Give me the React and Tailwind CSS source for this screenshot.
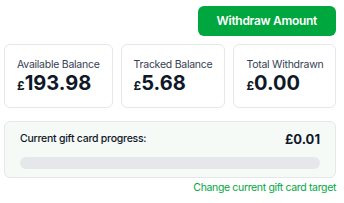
import React from 'react';

const stats = [
  { label: 'Available Balance', value: '193.98' },
  { label: 'Tracked Balance', value: '5.68' },
  { label: 'Total Withdrawn', value: '0.00' },
];

const App = () => {
  return (
    <div className="pl-1 pr-2 pt-[6px] font-['Inter',sans-serif] text-gray-900 bg-white">
      <div className="flex justify-end">
        <button className="h-[30px] px-[19px] rounded-md bg-green-600 text-white text-[12px] font-semibold tracking-[-0.3px]">
          Withdraw Amount
        </button>
      </div>

      <div className="flex gap-2 mt-2">
        {stats.map(s => (
          <div key={s.label} className="flex-auto border border-gray-200 rounded-md px-3 pt-[13px] pb-[11px]">
            <p className="text-[10.5px] leading-[13px] text-gray-700 whitespace-nowrap tracking-[-0.25px]">{s.label}</p>
            <p className="font-bold leading-[20px] mt-[2px] whitespace-nowrap">
              <span className="text-[12px]">£</span>
              <span className="text-[20px]">{s.value}</span>
            </p>
          </div>
        ))}
      </div>

      <div className="mt-[13px] border border-gray-200 rounded-md bg-[#f6faf7] px-[15px] pt-[10px] pb-[8px]">
        <div className="flex items-center justify-between">
          <span className="text-[10.5px] leading-[14px] font-medium tracking-[-0.25px]">Current gift card progress:</span>
          <span className="text-[13px] leading-[14px] font-bold">£0.01</span>
        </div>
        <div className="mt-[11px] h-3 rounded-full bg-gray-200"></div>
      </div>

      <div className="flex justify-end mt-[3px]">
        <a className="text-[10.5px] leading-[14px] text-green-600 tracking-[-0.35px]">Change current gift card target</a>
      </div>
    </div>
  );
};

export default App;
